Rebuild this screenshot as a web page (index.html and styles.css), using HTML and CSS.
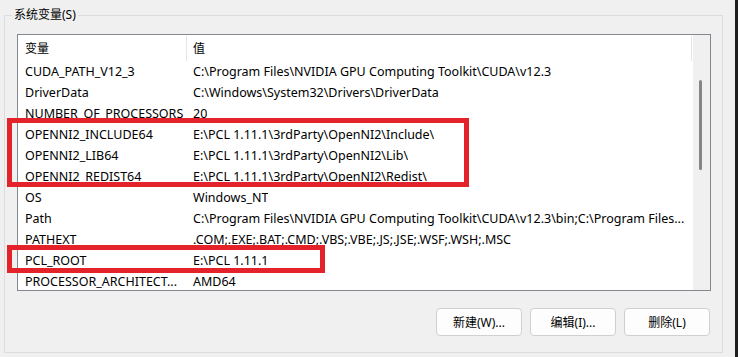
FILE: index.html
```html
<!DOCTYPE html>
<html lang="zh-CN">
<head>
  <meta charset="UTF-8" />
  <title>系统变量</title>
  <link rel="stylesheet" href="styles.css">
</head>
<body>
  <div class="window">
    <div class="group">
      <div class="group-title">系统变量(S)</div>

      <div class="listbox">
        <div class="table">
          <div class="head">
            <div class="hcell name">变量</div>
            <div class="hcell value">值</div>
          </div>
          <div class="row"><div class="name">CUDA_PATH_V12_3</div><div class="value">C:\Program Files\NVIDIA GPU Computing Toolkit\CUDA\v12.3</div></div>
          <div class="row"><div class="name">DriverData</div><div class="value">C:\Windows\System32\Drivers\DriverData</div></div>
          <div class="row"><div class="name">NUMBER_OF_PROCESSORS</div><div class="value">20</div></div>
          <div class="row"><div class="name">OPENNI2_INCLUDE64</div><div class="value">E:\PCL 1.11.1\3rdParty\OpenNI2\Include\</div></div>
          <div class="row"><div class="name">OPENNI2_LIB64</div><div class="value">E:\PCL 1.11.1\3rdParty\OpenNI2\Lib\</div></div>
          <div class="row"><div class="name">OPENNI2_REDIST64</div><div class="value">E:\PCL 1.11.1\3rdParty\OpenNI2\Redist\</div></div>
          <div class="row"><div class="name">OS</div><div class="value">Windows_NT</div></div>
          <div class="row"><div class="name">Path</div><div class="value">C:\Program Files\NVIDIA GPU Computing Toolkit\CUDA\v12.3\bin;C:\Program Files...</div></div>
          <div class="row"><div class="name">PATHEXT</div><div class="value">.COM;.EXE;.BAT;.CMD;.VBS;.VBE;.JS;.JSE;.WSF;.WSH;.MSC</div></div>
          <div class="row"><div class="name">PCL_ROOT</div><div class="value">E:\PCL 1.11.1</div></div>
          <div class="row"><div class="name">PROCESSOR_ARCHITECT...</div><div class="value">AMD64</div></div>
        </div>
        <div class="scrollbar"><div class="thumb"></div></div>
      </div>

      <div class="buttons">
        <button>新建(W)...</button>
        <button>编辑(I)...</button>
        <button>删除(L)</button>
      </div>
    </div>

    <div class="mark mark-openni"></div>
    <div class="mark mark-pcl"></div>
  </div>
</body>
</html>
```

FILE: styles.css
```css
body {
  margin: 0;
  background: #f0f0f0;
  font-family: "Noto Sans", "Noto Sans CJK SC", sans-serif;
  font-size: 12px;
  color: #000;
}
.window {
  position: relative;
  width: 735px;
  height: 357px;
  border-right: 3px solid #1e1e1e;
  overflow: hidden;
}
.group {
  margin: 15px 0 0 4px;
  width: 717px;
  height: 336px;
  border: 1px solid #dcdcdc;
}
.group-title {
  width: max-content;
  margin: -9px 0 0 7px;
  padding: 0 2px;
  line-height: 16px;
  background: #f0f0f0;
}
.listbox {
  display: flex;
  margin: 11px 0 0 12px;
  width: 692px;
  height: 255px;
  border: 1px solid #828790;
  background: #fff;
  overflow: hidden;
}
.table { width: 675px; }
.head { display: flex; height: 26px; }
.hcell {
  margin-top: 1px;
  height: 25px;
  line-height: 25px;
  border-right: 1px solid #e5e5e5;
}
.head .value { width: 498px; }
.row {
  display: flex;
  height: 21px;
  line-height: 21px;
  font-size: 12.5px;
  white-space: nowrap;
}
.name { width: 161px; padding-left: 7px; }
.hcell.name { width: 161px; }
.row .name { width: 162px; overflow: hidden; }
.value { padding-left: 6px; overflow: hidden; }
.scrollbar {
  width: 17px;
  background: #f0f0f0;
}
.thumb {
  margin: 45px 0 0 6px;
  width: 3px;
  height: 90px;
  border-radius: 2px;
  background: #868686;
}
.buttons {
  display: flex;
  justify-content: flex-end;
  gap: 8px;
  margin: 17px 12px 0 0;
}
button {
  width: 86px;
  height: 28px;
  padding: 0;
  font: inherit;
  color: #000;
  background: #fdfdfd;
  border: 1px solid #d0d0d0;
  border-radius: 4px;
}
.mark {
  position: absolute;
  box-sizing: border-box;
  border: 5px solid #e3222a;
}
.mark-openni { left: 7px; top: 118px; width: 462px; height: 69px; }
.mark-pcl { left: 7px; top: 245px; width: 318px; height: 28px; }
```
